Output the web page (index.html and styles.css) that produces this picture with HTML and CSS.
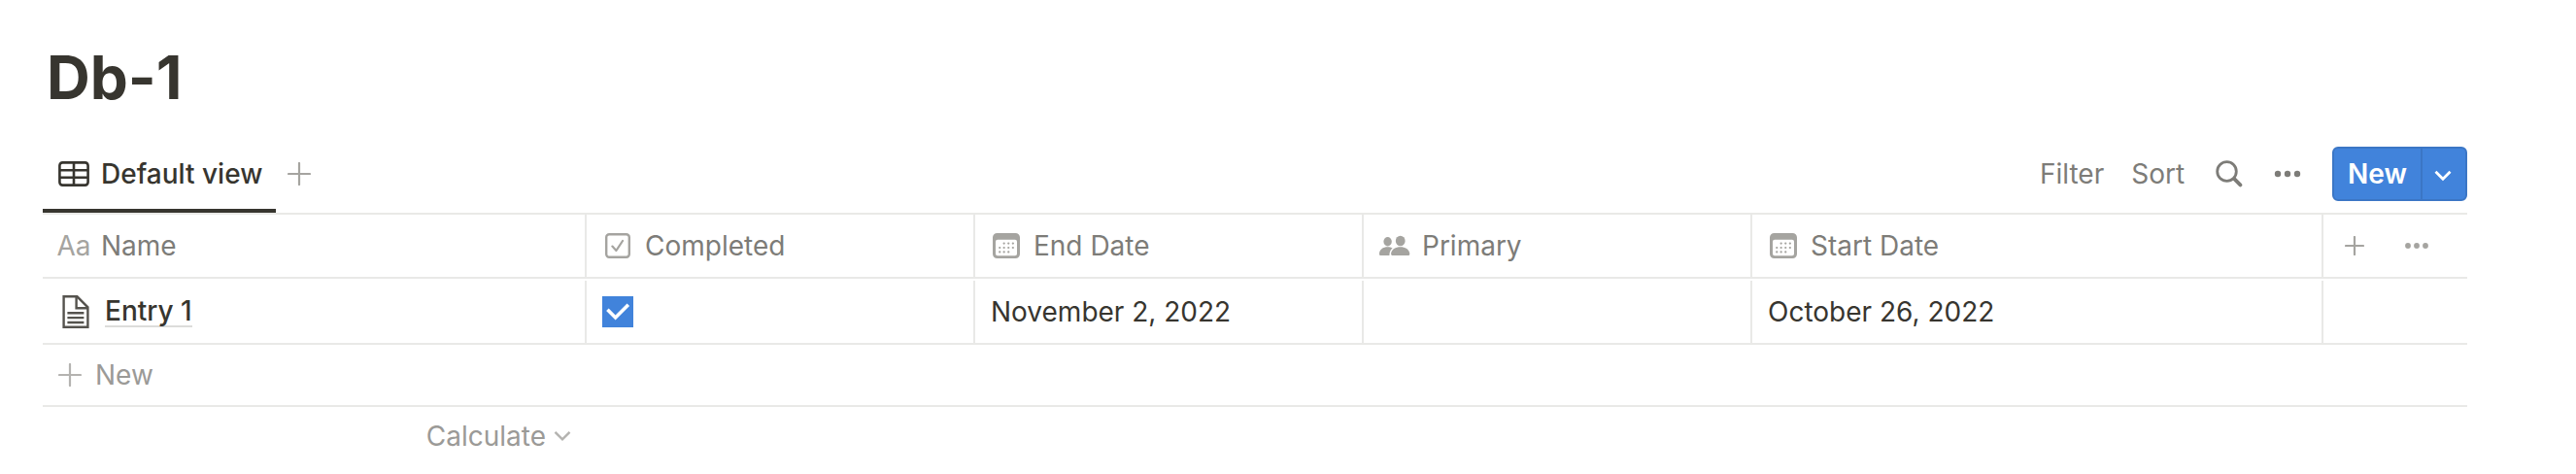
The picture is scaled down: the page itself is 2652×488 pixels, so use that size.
FILE: index.html
```html
<!DOCTYPE html>
<html lang="en">
<head>
<meta charset="utf-8">
<title>Db-1</title>
<link rel="stylesheet" href="styles.css">
</head>
<body>
<main class="page">
  <h1 class="title">Db-1</h1>

  <div class="toolbar">
    <div class="tabs">
      <button class="tab" type="button">
        <svg class="icon" width="32" height="26" viewBox="0 0 32 26" fill="none" stroke="currentColor" stroke-width="2.6">
          <rect x="1.4" y="1.4" width="29.2" height="23.2" rx="3"/>
          <path d="M1.4 9.2h29.2M1.4 16.8h29.2M16 1.4v23.2"/>
        </svg>
        <span>Default view</span>
      </button>
      <button class="plain add-view" type="button" aria-label="Add view">
        <svg class="icon" width="24" height="24" viewBox="0 0 24 24" stroke="currentColor" stroke-width="2.2" stroke-linecap="round"><path d="M12 1v22M1 12h22"/></svg>
      </button>
    </div>
    <div class="actions">
      <div class="text-actions">
        <button class="plain" type="button">Filter</button>
        <button class="plain" type="button">Sort</button>
      </div>
      <button class="plain" type="button" aria-label="Search">
        <svg class="icon" width="28" height="28" viewBox="0 0 28 28" fill="none" stroke="currentColor" stroke-linecap="round"><circle cx="11.5" cy="11.5" r="9.8" stroke-width="2.8"/><path d="M19.2 19.2l6.2 6.2" stroke-width="3.8"/></svg>
      </button>
      <button class="plain" type="button" aria-label="More options">
        <svg class="icon" width="28" height="8" viewBox="0 0 28 8" fill="currentColor"><circle cx="4" cy="4" r="3.2"/><circle cx="14" cy="4" r="3.2"/><circle cx="24" cy="4" r="3.2"/></svg>
      </button>
      <div class="split">
        <button class="split-main" type="button">New</button>
        <button class="split-more" type="button" aria-label="New options">
          <svg class="icon" width="18" height="12" viewBox="0 0 18 12" fill="none" stroke="currentColor" stroke-width="2.8"><path d="M1.5 1.8L9 9.3l7.500-7.500"/></svg>
        </button>
      </div>
    </div>
  </div>

  <table class="grid">
    <colgroup>
      <col class="col-name"><col class="col-prop"><col class="col-prop"><col class="col-prop"><col class="col-wide"><col>
    </colgroup>
    <thead>
      <tr>
        <th scope="col"><div class="head"><span class="slot" aria-hidden="true">Aa</span>Name</div></th>
        <th scope="col"><div class="head"><span class="slot">
          <svg class="icon" width="26" height="26" viewBox="0 0 26 26" fill="none" stroke="currentColor" stroke-width="2.4"><rect x="1.2" y="1.2" width="23.600" height="23.600" rx="3"/><path d="M7.400 13.600l4 4.400 6.600-10" stroke-linecap="round" stroke-linejoin="round" stroke-width="2.200"/></svg>
        </span>Completed</div></th>
        <th scope="col"><div class="head"><span class="slot">
          <svg class="icon" width="28" height="26" viewBox="0 0 28 26" fill="currentColor"><path fill-rule="evenodd" d="M4.500 0h19A4.500 4.500 0 0 1 28 4.500v17a4.500 4.500 0 0 1-4.500 4.500h-19A4.500 4.500 0 0 1 0 21.500v-17A4.500 4.500 0 0 1 4.500 0zM5 6.800a2 2 0 0 0-2 2v12.400a2 2 0 0 0 2 2h18a2 2 0 0 0 2-2V8.800a2 2 0 0 0-2-2z"/><path d="M11.600 10.600h.1M16.200 10.600h.1M20.800 10.600h.1M7.200 15h.1M11.600 15h.1M16.200 15h.1M20.800 15h.1M7.200 19.400h.1M11.600 19.400h.1M16.200 19.400h.1" fill="none" stroke="currentColor" stroke-width="2.200" stroke-linecap="round"/></svg>
        </span>End Date</div></th>
        <th scope="col"><div class="head"><span class="slot">
          <svg class="icon" width="32" height="22" viewBox="0 0 32 22" fill="currentColor"><ellipse cx="8.600" cy="6.700" rx="4.200" ry="4.700"/><ellipse cx="21.700" cy="6" rx="4.900" ry="5.200"/><path d="M0 19.500c0-4.500 3.700-7.200 8.600-7.200 1.900 0 3.600.4 5 1.300-2 1.600-3.200 4-3.200 7.400H1.200C.4 21 0 20.400 0 19.500zM12.100 19.500c0-4 3.900-7.200 9.600-7.200s9.600 3.200 9.600 7.200c0 .9-.5 1.500-1.500 1.500H13.600c-1 0-1.500-.6-1.500-1.500z"/></svg>
        </span>Primary</div></th>
        <th scope="col"><div class="head"><span class="slot">
          <svg class="icon" width="28" height="26" viewBox="0 0 28 26" fill="currentColor"><path fill-rule="evenodd" d="M4.500 0h19A4.500 4.500 0 0 1 28 4.500v17a4.500 4.500 0 0 1-4.500 4.500h-19A4.500 4.500 0 0 1 0 21.500v-17A4.500 4.500 0 0 1 4.500 0zM5 6.800a2 2 0 0 0-2 2v12.400a2 2 0 0 0 2 2h18a2 2 0 0 0 2-2V8.800a2 2 0 0 0-2-2z"/><path d="M11.600 10.600h.1M16.200 10.600h.1M20.800 10.600h.1M7.200 15h.1M11.600 15h.1M16.200 15h.1M20.800 15h.1M7.200 19.400h.1M11.600 19.400h.1M16.200 19.400h.1" fill="none" stroke="currentColor" stroke-width="2.200" stroke-linecap="round"/></svg>
        </span>Start Date</div></th>
        <td class="tools"><div class="tools-row">
          <button class="plain" type="button" aria-label="Add property">
            <svg class="icon" width="20" height="20" viewBox="0 0 20 20" stroke="currentColor" stroke-width="2.200" stroke-linecap="round"><path d="M10 1v18M1 10h18"/></svg>
          </button>
          <button class="plain" type="button" aria-label="Property options">
            <svg class="icon" width="24" height="6" viewBox="0 0 24 6" fill="currentColor"><circle cx="3" cy="3" r="2.900"/><circle cx="12" cy="3" r="2.900"/><circle cx="21" cy="3" r="2.900"/></svg>
          </button>
        </div></td>
      </tr>
    </thead>
    <tbody>
      <tr class="entry">
        <td><div class="entry-name">
          <span class="slot-page">
            <svg class="icon" width="28" height="34" viewBox="0 0 28 34" fill="none" stroke="currentColor" stroke-width="2.400"><path d="M1.600 1.300h13.800l11 11v20.400H1.600z"/><path d="M14.600 1.300v12h11.800"/><path d="M5.400 18.300h17M5.400 23.100h17M5.400 28h17"/></svg>
          </span>
          <a class="entry-link" href="#entry-1">Entry 1</a>
        </div></td>
        <td><label class="check">
          <input type="checkbox" checked aria-label="Completed">
          <svg class="icon" width="32" height="32" viewBox="0 0 32 32" fill="none" stroke="#fff" stroke-width="3.600"><path d="M5.400 13.800l8.200 8.200L26.800 8.800"/></svg>
        </label></td>
        <td>November 2, 2022</td>
        <td></td>
        <td>October 26, 2022</td>
        <td></td>
      </tr>
      <tr class="new-row">
        <td colspan="6">
          <button class="plain new-entry" type="button">
            <svg class="icon" width="24" height="24" viewBox="0 0 24 24" stroke="currentColor" stroke-width="2.200" stroke-linecap="round"><path d="M12 1v22M1 12h22"/></svg>
            <span>New</span>
          </button>
        </td>
      </tr>
    </tbody>
    <tfoot>
      <tr>
        <td>
          <button class="plain calculate" type="button">
            <span>Calculate</span>
            <svg class="icon" width="18" height="12" viewBox="0 0 18 12" fill="none" stroke="currentColor" stroke-width="2.400"><path d="M1.500 1.800L9 9.300l7.500-7.500"/></svg>
          </button>
        </td>
        <td colspan="5"></td>
      </tr>
    </tfoot>
  </table>
</main>
</body>
</html>
```

FILE: styles.css
```css
:root {
  --text: #37352f;
  --muted: #7d7c78;
  --faint: #9b9a97;
  --icon: #a5a4a0;
  --line: #e9e9e7;
  --blue: #4183db;
  --blue-edge: #3b76c5;
}

* {
  box-sizing: border-box;
}

body {
  margin: 0;
  background: #fff;
  color: var(--text);
  font-family: Inter, "Liberation Sans", sans-serif;
  font-size: 28px;
  line-height: 40px;
}

button {
  margin: 0;
  padding: 0;
  border: 0;
  background: none;
  color: inherit;
  font: inherit;
  cursor: pointer;
}

.icon {
  display: block;
  flex: none;
}

.plain {
  display: flex;
  align-items: center;
}

.page {
  padding: 40px 112px 0 44px;
}

.title {
  margin: 0 0 20px;
  padding-left: 4px;
  font-size: 62px;
  font-weight: 700;
  line-height: 79px;
}

/* View tabs and actions */

.toolbar {
  display: flex;
  justify-content: space-between;
  height: 82px;
  border-bottom: 2px solid var(--line);
}

.tabs,
.actions {
  display: flex;
  align-items: center;
}

.tab {
  display: flex;
  align-items: center;
  gap: 12px;
  height: 80px;
  padding: 4px 14px 0 16px;
  border-bottom: 4px solid var(--text);
  font-weight: 500;
}

.add-view {
  padding-left: 12px;
  color: var(--icon);
}

.actions {
  gap: 32px;
  color: var(--muted);
}

.text-actions {
  display: flex;
  gap: 28px;
}

.split {
  display: flex;
  height: 56px;
  border: 2px solid var(--blue-edge);
  border-radius: 6px;
  background: var(--blue);
  color: #fff;
}

.split-main {
  padding: 0 14px;
  font-weight: 600;
}

.split-more {
  display: flex;
  align-items: center;
  padding: 4px 14px 0 12px;
  border-left: 2px solid var(--blue-edge);
}

/* Table */

.grid {
  width: 100%;
  table-layout: fixed;
  border-collapse: separate;
  border-spacing: 0;
}

.col-name {
  width: 560px;
}

.col-prop {
  width: 400px;
}

.col-wide {
  width: 588px;
}

.grid th,
.grid td {
  padding: 0 16px;
  border-bottom: 2px solid var(--line);
  text-align: left;
  font-weight: 400;
  white-space: nowrap;
}

.grid thead tr {
  height: 66px;
}

.grid th {
  border-right: 2px solid var(--line);
  color: var(--muted);
}

.head {
  display: flex;
  align-items: center;
  gap: 12px;
}

.slot {
  display: flex;
  justify-content: center;
  width: 32px;
  color: var(--icon);
}

.grid .tools {
  padding-left: 22px;
  color: var(--icon);
}

.tools-row {
  display: flex;
  align-items: center;
  gap: 42px;
}

.entry {
  height: 68px;
}

.grid .entry td {
  padding-top: 2px;
}

/* Column rules start just below the header line */
.entry td:not(:last-child) {
  background: linear-gradient(var(--line), var(--line)) right bottom / 2px calc(100% - 2px) no-repeat;
}

.entry-name {
  display: flex;
  align-items: center;
  gap: 12px;
}

.slot-page {
  display: flex;
  justify-content: center;
  width: 36px;
  color: #55534e;
}

.entry-link {
  border-bottom: 2px solid #dcdcda;
  color: inherit;
  font-weight: 500;
  line-height: 30px;
  text-decoration: none;
}

.check {
  display: grid;
  width: 32px;
}

.check input,
.check .icon {
  grid-area: 1 / 1;
}

.check input {
  width: 32px;
  height: 32px;
  margin: 0;
  appearance: none;
}

.check input:checked {
  background: var(--blue);
}

.check .icon {
  pointer-events: none;
}

.new-row {
  height: 64px;
}

.new-entry {
  gap: 14px;
  color: var(--faint);
}

.new-entry .icon,
.calculate .icon {
  color: #b4b3b0;
}

.grid tfoot tr {
  height: 60px;
}

.grid tfoot td {
  border-bottom: 0;
}

.calculate {
  gap: 8px;
  margin-left: auto;
  color: var(--faint);
}
```
